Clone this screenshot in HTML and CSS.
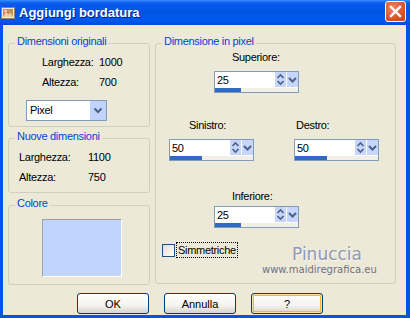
FILE: index.html
```html
<!DOCTYPE html>
<html lang="it">
<head>
  <meta charset="UTF-8" />
  <title>Aggiungi bordatura</title>
  <link rel="stylesheet" href="styles.css">
</head>
<body>
  <div class="window">
    <div class="titlebar">
      <svg class="app-icon" width="14" height="14" viewBox="0 0 14 14">
        <rect x="0.5" y="1.5" width="13" height="11" fill="#EFEBE4" stroke="#8C8478"/>
        <rect x="2" y="3" width="10" height="8" fill="#C98B5C"/>
        <path d="M2 11 L5 6 L7.5 8.5 L9.5 6.5 L12 11 Z" fill="#F3CDA4"/>
        <circle cx="4.5" cy="5" r="1.2" fill="#FBE3C6"/>
      </svg>
      <span class="title">Aggiungi bordatura</span>
      <div class="close">
        <svg width="19" height="19" viewBox="0 0 19 19">
          <path d="M5 5 L14 14 M14 5 L5 14" stroke="#fff" stroke-width="2.4" stroke-linecap="square"/>
        </svg>
      </div>
    </div>

    <div class="client">
      <div class="columns">
        <div class="col-left">
          <div class="group g-orig">
            <span class="legend">Dimensioni originali</span>
            <div class="row"><span class="lbl">Larghezza:</span><span>1000</span></div>
            <div class="row"><span class="lbl">Altezza:</span><span>700</span></div>
            <div class="select">
              <span class="select-text">Pixel</span>
              <span class="drop">
                <svg width="16" height="19" viewBox="0 0 16 19"><polyline points="4.5,7.5 8,11 11.5,7.5" fill="none" stroke="#4D6185" stroke-width="2"/></svg>
              </span>
            </div>
          </div>

          <div class="group g-new">
            <span class="legend">Nuove dimensioni</span>
            <div class="row"><span class="lbl">Larghezza:</span><span>1100</span></div>
            <div class="row"><span class="lbl">Altezza:</span><span>750</span></div>
          </div>

          <div class="group g-color">
            <span class="legend">Colore</span>
            <div class="swatch"></div>
          </div>
        </div>

        <div class="group g-pixel">
          <span class="legend">Dimensione in pixel</span>

          <div class="field f-top">
            <div class="field-label">Superiore:</div>
            <div class="spin">
              <div class="spin-main">
                <span class="spin-value">25</span>
                <span class="spin-arrows"><svg width="11" height="15" viewBox="0 0 11 15"><polyline points="2.5,6 5.5,3 8.5,6" fill="none" stroke="#4D6185" stroke-width="1.6"/><polyline points="2.5,9 5.5,12 8.5,9" fill="none" stroke="#4D6185" stroke-width="1.6"/></svg></span>
                <span class="spin-drop"><svg width="11" height="15" viewBox="0 0 11 15"><polyline points="2,6 5.5,9.5 9,6" fill="none" stroke="#4D6185" stroke-width="2"/></svg></span>
              </div>
              <div class="spin-track"><div class="spin-fill"></div></div>
            </div>
          </div>

          <div class="side-row">
            <div class="field f-left">
              <div class="field-label">Sinistro:</div>
              <div class="spin">
                <div class="spin-main">
                  <span class="spin-value">50</span>
                  <span class="spin-arrows"><svg width="11" height="15" viewBox="0 0 11 15"><polyline points="2.5,6 5.5,3 8.5,6" fill="none" stroke="#4D6185" stroke-width="1.6"/><polyline points="2.5,9 5.5,12 8.5,9" fill="none" stroke="#4D6185" stroke-width="1.6"/></svg></span>
                  <span class="spin-drop"><svg width="11" height="15" viewBox="0 0 11 15"><polyline points="2,6 5.5,9.5 9,6" fill="none" stroke="#4D6185" stroke-width="2"/></svg></span>
                </div>
                <div class="spin-track"><div class="spin-fill wide"></div></div>
              </div>
            </div>
            <div class="field f-right">
              <div class="field-label">Destro:</div>
              <div class="spin">
                <div class="spin-main">
                  <span class="spin-value">50</span>
                  <span class="spin-arrows"><svg width="11" height="15" viewBox="0 0 11 15"><polyline points="2.5,6 5.5,3 8.5,6" fill="none" stroke="#4D6185" stroke-width="1.6"/><polyline points="2.5,9 5.5,12 8.5,9" fill="none" stroke="#4D6185" stroke-width="1.6"/></svg></span>
                  <span class="spin-drop"><svg width="11" height="15" viewBox="0 0 11 15"><polyline points="2,6 5.5,9.5 9,6" fill="none" stroke="#4D6185" stroke-width="2"/></svg></span>
                </div>
                <div class="spin-track"><div class="spin-fill wide"></div></div>
              </div>
            </div>
          </div>

          <div class="field f-bottom">
            <div class="field-label">Inferiore:</div>
            <div class="spin">
              <div class="spin-main">
                <span class="spin-value">25</span>
                <span class="spin-arrows"><svg width="11" height="15" viewBox="0 0 11 15"><polyline points="2.5,6 5.5,3 8.5,6" fill="none" stroke="#4D6185" stroke-width="1.6"/><polyline points="2.5,9 5.5,12 8.5,9" fill="none" stroke="#4D6185" stroke-width="1.6"/></svg></span>
                <span class="spin-drop"><svg width="11" height="15" viewBox="0 0 11 15"><polyline points="2,6 5.5,9.5 9,6" fill="none" stroke="#4D6185" stroke-width="2"/></svg></span>
              </div>
              <div class="spin-track"><div class="spin-fill"></div></div>
            </div>
          </div>

          <div class="check">
            <span class="check-box"></span>
            <span class="check-text">Simmetriche</span>
          </div>

          <div class="watermark">
            <div class="wm-name">Pinuccia</div>
            <div class="wm-url">www.maidiregrafica.eu</div>
          </div>
        </div>
      </div>

      <div class="buttons">
        <button class="btn">OK</button>
        <button class="btn">Annulla</button>
        <button class="btn btn-help">?</button>
      </div>
    </div>
  </div>
</body>
</html>
```

FILE: styles.css
```css
body {
  margin: 0;
  font-family: "Liberation Sans", Arial, sans-serif;
  font-size: 11px;
  letter-spacing: -0.3px;
  color: #000;
}
.window {
  width: 410px;
  height: 318px;
  display: flex;
  flex-direction: column;
}
.titlebar {
  height: 25px;
  flex: none;
  display: flex;
  align-items: center;
  padding: 0 4px 0 1px;
  background: linear-gradient(#3C8CFF 0, #0A5BF0 3px, #0054E3 45%, #0058EC 85%, #0048D9 100%);
}
.app-icon {
  margin-right: 4px;
}
.title {
  flex: 1;
  color: #fff;
  font-weight: bold;
  font-size: 13px;
  letter-spacing: 0;
  text-shadow: 1px 1px #0A1C8C;
}
.close {
  align-self: flex-start;
  margin-top: 1px;
  width: 21px;
  height: 21px;
  box-sizing: border-box;
  border: 1px solid #fff;
  border-radius: 3px;
  background: radial-gradient(circle at 35% 30%, #F08464, #DD4E28 65%, #C43D15);
  display: flex;
  align-items: center;
  justify-content: center;
}
.client {
  flex: 1;
  background: #ECE9D8;
  border: solid #0055E5;
  border-width: 0 4px 3px 3px;
  padding: 18px 10px 0 5px;
}
.columns {
  display: flex;
  gap: 5px;
  align-items: flex-start;
}
.col-left {
  width: 142px;
  display: flex;
  flex-direction: column;
}
.group {
  position: relative;
  box-sizing: border-box;
  border: 1px solid #D0D0BF;
  border-radius: 3px;
}
.legend {
  position: absolute;
  top: -9px;
  left: 6px;
  padding: 0 2px;
  line-height: 13px;
  background: #ECE9D8;
  color: #0046D5;
  white-space: nowrap;
}
.row {
  display: flex;
  line-height: 20px;
}
.g-orig {
  height: 84px;
  padding-top: 8px;
}
.g-orig .row {
  padding-left: 33px;
}
.g-orig .lbl {
  width: 57px;
}
.g-new {
  height: 55px;
  margin-top: 11px;
  padding-top: 8px;
}
.g-new .row {
  padding-left: 10px;
}
.g-new .lbl {
  width: 69px;
}
.g-color {
  height: 80px;
  margin-top: 12px;
  padding: 13px 0 0 33px;
}
.swatch {
  width: 80px;
  height: 58px;
  box-sizing: border-box;
  background: #C0D4FD;
  border: 1px solid;
  border-color: #A0A0A0 #FFFFFF #FFFFFF #A0A0A0;
}
.select {
  margin: 8px 0 0 17px;
  width: 81px;
  height: 21px;
  box-sizing: border-box;
  border: 1px solid #7F9DB9;
  background: #fff;
  display: flex;
}
.select-text {
  flex: 1;
  padding-left: 3px;
  line-height: 19px;
}
.drop {
  width: 16px;
  height: 19px;
  background: #C1D3FB;
}

/* right group */
.g-pixel {
  width: 241px;
  height: 241px;
  padding-top: 6px;
}
.field-label {
  line-height: 14px;
  margin-bottom: 7px;
}
.f-top {
  margin-left: 58px;
}
.f-top .field-label,
.f-bottom .field-label {
  padding-left: 18px;
}
.side-row {
  display: flex;
  gap: 40px;
  margin-top: 25px;
  padding-left: 13px;
}
.f-left .field-label {
  padding-left: 20px;
}
.f-right .field-label {
  padding-left: 2px;
}
.f-bottom {
  margin: 28px 0 0 58px;
}
.f-bottom .field-label {
  margin-bottom: 3px;
}
.spin {
  width: 85px;
  height: 22px;
  box-sizing: border-box;
  border: 1px solid #7F9DB9;
  background: #fff;
  display: flex;
  flex-direction: column;
}
.spin-main {
  height: 16px;
  display: flex;
}
.spin-value {
  flex: 1;
  padding-left: 2px;
  line-height: 16px;
}
.spin-arrows,
.spin-drop {
  width: 11px;
  height: 15px;
  background: #C6D5F9;
}
.spin-arrows {
  margin-right: 1px;
}
.spin-track {
  height: 4px;
  margin-top: auto;
  background: #F1EFE6;
}
.spin-fill {
  width: 26px;
  height: 100%;
  background: #316AC5;
}
.spin-fill.wide {
  width: 32px;
}
.check {
  display: flex;
  align-items: center;
  margin: 15px 0 0 6px;
}
.check-box {
  width: 13px;
  height: 13px;
  box-sizing: border-box;
  border: 1px solid #1C5180;
  background: linear-gradient(135deg, #DCDCD7, #FFFFFF);
}
.check-text {
  margin-left: 2px;
  padding: 0 1px;
  line-height: 14px;
  outline: 1px dotted #000;
}
.watermark {
  position: absolute;
  left: 106px;
  top: 200px;
  letter-spacing: 0;
  font-family: "DejaVu Sans", sans-serif;
}
.wm-name {
  padding-left: 30px;
  font-size: 17px;
  line-height: 20px;
  color: #9198B4;
  text-shadow: 1px 1px 0 #F8F8F4;
}
.wm-url {
  font-size: 10px;
  line-height: 12px;
  color: #6E7383;
}

/* buttons */
.buttons {
  display: flex;
  gap: 15px;
  margin-top: 8px;
  padding-left: 69px;
}
.btn {
  width: 72px;
  height: 21px;
  box-sizing: border-box;
  padding: 0;
  border: 1px solid #003C74;
  border-radius: 3px;
  background: linear-gradient(#FFFFFF, #F3F3EF 60%, #D8D4CA);
  font: inherit;
  color: #000;
}
.btn-help {
  box-shadow: inset 0 0 0 1px #FCE2A4, inset 0 0 0 2px #F5B43C;
}
```
